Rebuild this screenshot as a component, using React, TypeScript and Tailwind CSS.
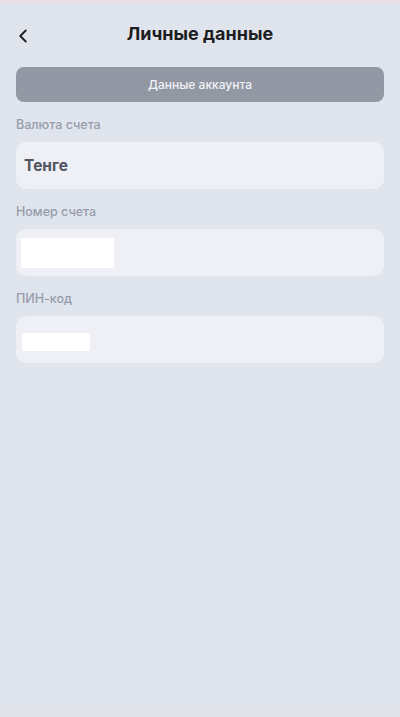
import { ChevronLeft } from "lucide-react";

function Field({ label, children }: { label: string; children: React.ReactNode }) {
  return (
    <div className="mt-[15px]">
      <p className="text-[12.5px] leading-[16px] font-medium text-[#969cab]">{label}</p>
      <div className="mt-[9px] flex h-[47px] items-center rounded-[10px] bg-[#eef0f5] px-2">
        {children}
      </div>
    </div>
  );
}

export default function App() {
  return (
    <div
      className="flex h-[717px] w-[400px] flex-col bg-[#e0e4ed]"
      style={{ fontFamily: "Inter, 'Noto Sans', sans-serif" }}
    >
      <div className="h-[3px] bg-[#ebe0e6]" />
      <header className="relative flex h-[60px] items-center justify-center">
        <ChevronLeft className="absolute top-[22px] left-[12px] size-[22px] text-[#1c1d21]" strokeWidth={2} />
        <h1 className="text-[18px] font-bold text-[#1c1d21]">Личные данные</h1>
      </header>
      <main className="flex-1 px-4 pt-[4px]">
        <div className="flex h-[35px] items-center justify-center rounded-[8px] bg-[#9297a4]">
          <span className="text-[12px] font-medium text-[#f2f3f6]">Данные аккаунта</span>
        </div>
        <Field label="Валюта счета">
          <span className="text-[15.5px] font-bold text-[#50555f]">Тенге</span>
        </Field>
        <Field label="Номер счета">
          <div className="h-[30px] w-[93px] -ml-[3px] bg-white" />
        </Field>
        <Field label="ПИН-код">
          <div className="h-[18px] w-[68px] -ml-[2px] mt-[4px] bg-white" />
        </Field>
      </main>
      <div className="h-[6px] bg-[#e3e3ea]" />
    </div>
  );
}
